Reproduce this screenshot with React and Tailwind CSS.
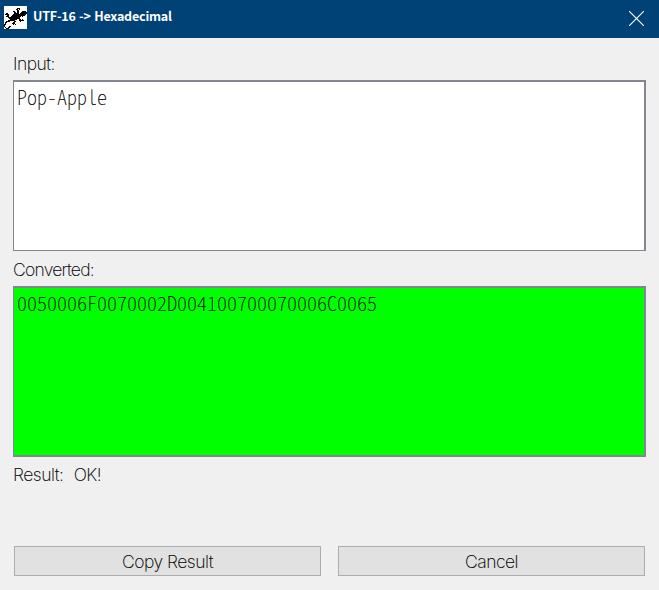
import React from "react";

const LIZARD_ROWS = [
  ".......................",
  ".......................",
  ".............###.......",
  "............##.#.......",
  ".............##........",
  ".........##..##...####.",
  "..........##.##..######",
  "..##......#####.#######",
  ".####....#############.",
  "...##...#############..",
  "..###..##########.#....",
  "....############.......",
  ".....###########.......",
  "......#######..##.#....",
  "....#######....#####...",
  "..####....##....#......",
  ".##......##............",
  ".#......###............",
  "##.......#.#...........",
  "#......................",
  "#....##................",
  ".#..##.................",
  "..###..................",
];

function Lizard() {
  return (
    <svg width="23" height="23" viewBox="0 0 23 23" shapeRendering="crispEdges" className="bg-white">
      {LIZARD_ROWS.flatMap((row, y) =>
        [...row].map((c, x) => (c === "#" ? <rect key={x + "-" + y} x={x} y={y} width="1" height="1" /> : null))
      )}
    </svg>
  );
}

function Label({ className, children }) {
  return <div className={"h-[28px] leading-[28px] text-[17.5px] whitespace-pre font-['Inter',sans-serif] font-extralight [-webkit-text-stroke:0.1px_#000] " + className}>{children}</div>;
}

function TextBox({ className, children }) {
  return (
    <div className={"h-[171px] w-[633px] border-l border-t-2 border-r-2 border-[#828790] pl-[3px] text-[20px] leading-[30px] font-thin [font-feature-settings:'hwid'] [-webkit-text-stroke:0.15px_#000] " + className}>
      {children}
    </div>
  );
}

function Button({ children }) {
  return (
    <button className="h-[30px] w-[307px] border border-[#adadad] bg-[#e1e1e1] pt-px text-[17.5px] leading-[28px] tracking-[-0.5px] font-['Inter',sans-serif] font-extralight [-webkit-text-stroke:0.1px_#000]">{children}</button>
  );
}

export default function App() {
  return (
    <div className="flex h-[590px] w-[659px] flex-col overflow-hidden bg-[#f0f0f0] font-['Noto_Sans_CJK_JP',sans-serif] text-black">
      <header className="flex h-[38px] shrink-0 bg-[#004275] pl-1 text-white">
        <div className="mt-[6px]"><Lizard /></div>
        <h1 className="ml-[6px] text-[12.5px] leading-[32px] font-bold tracking-[-0.2px] [word-spacing:0.8px]">UTF-16 -&gt; Hexadecimal</h1>
        <svg className="mt-[11px] mr-[15px] ml-auto" width="15" height="15" viewBox="0 0 15 15" stroke="#fff" strokeWidth="1.1">
          <path d="M0 0L15 15M15 0L0 15" />
        </svg>
      </header>
      <main className="pl-[13px]">
        <div className="h-[42px] pt-[12px]"><Label className="tracking-[-0.5px]">Input:</Label></div>
        <TextBox className="border-b bg-white">Pop-Apple</TextBox>
        <div className="h-[35px] pt-[5px]"><Label className="tracking-[-0.75px]">Converted:</Label></div>
        <TextBox className="border-b-2 bg-[#00ff00]">0050006F0070002D004100700070006C0065</TextBox>
        <div className="h-[31px] pt-[4px]"><Label className="tracking-[-0.5px] [word-spacing:0.8px]">Result:  OK!</Label></div>
        <div className="mt-[58px] ml-px flex gap-[17px]">
          <Button>Copy Result</Button>
          <Button>Cancel</Button>
        </div>
      </main>
    </div>
  );
}
